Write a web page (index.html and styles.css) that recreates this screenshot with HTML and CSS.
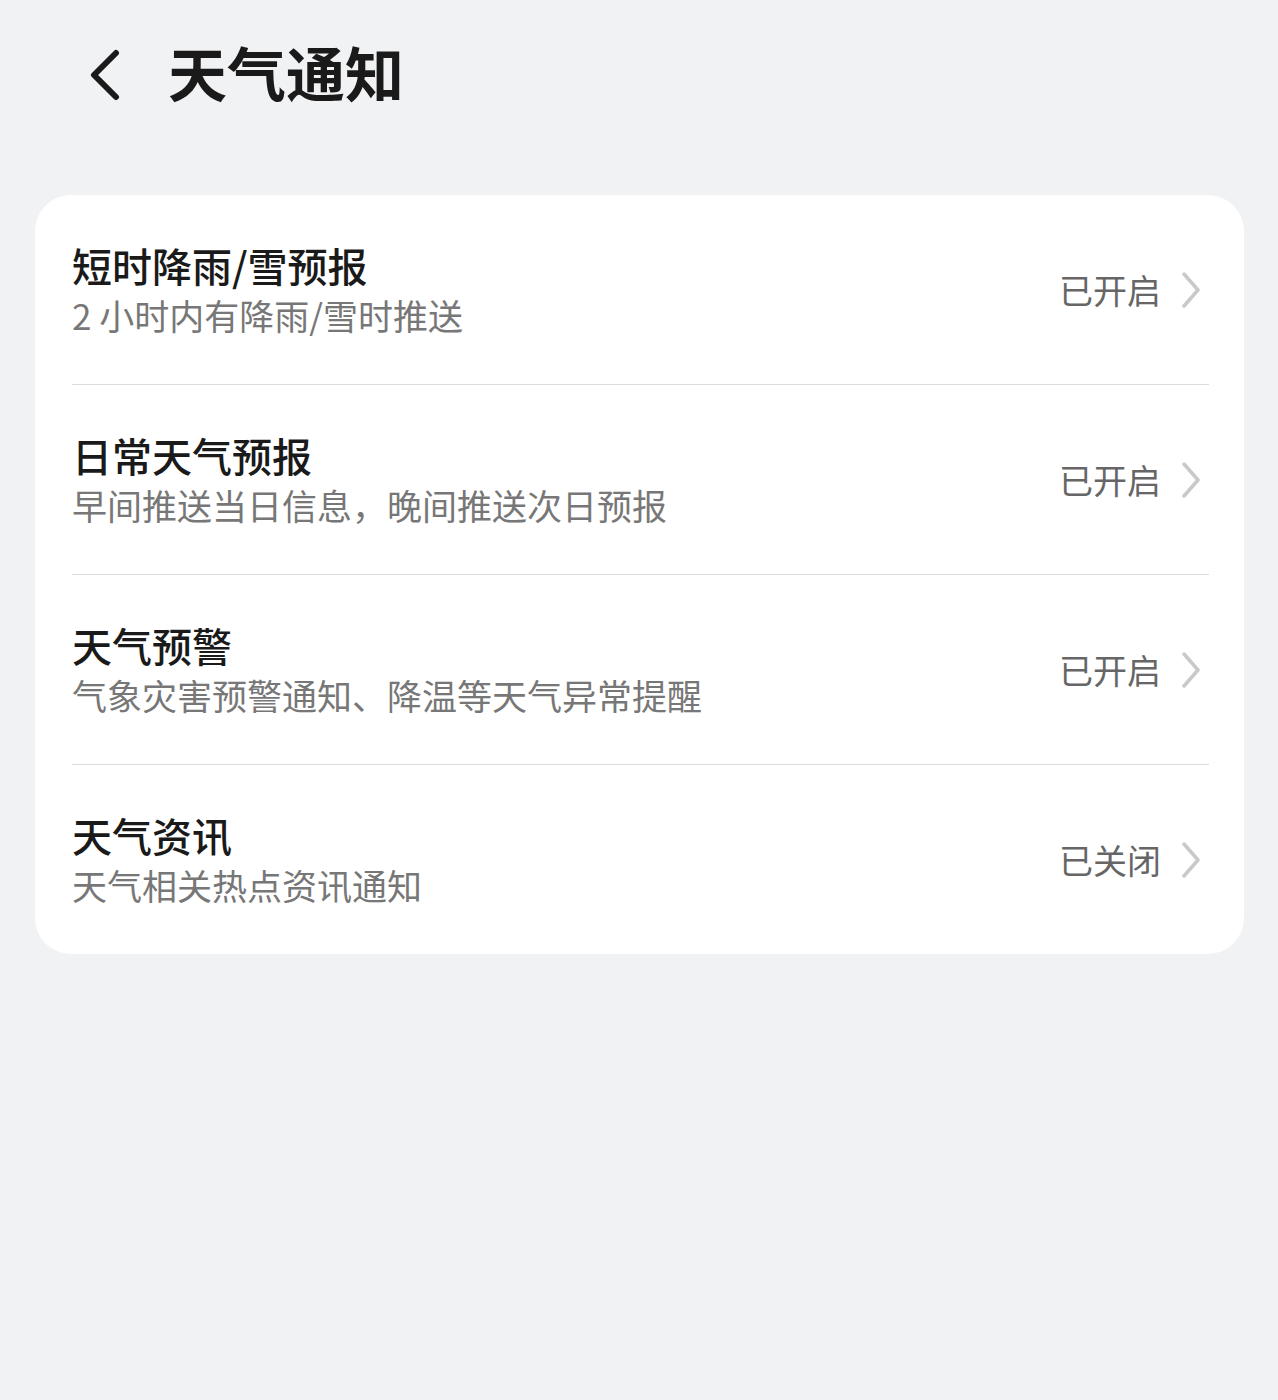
FILE: index.html
```html
<!DOCTYPE html>
<html lang="zh-CN">
<head>
    <meta charset="UTF-8">
    <meta name="viewport" content="width=device-width, initial-scale=1.0">
    <title>天气通知</title>
    <link rel="stylesheet" href="styles.css">
</head>
<body>

    <!-- Header -->
    <div class="header">
        <svg class="back" width="36" height="52" viewBox="0 0 36 52">
            <path d="M30 4 L8 26 L30 48" fill="none" stroke="#1a1a1a" stroke-width="6" stroke-linecap="round" stroke-linejoin="round"/>
        </svg>
        <h1>天气通知</h1>
    </div>

    <!-- Settings list -->
    <div class="card">
        <div class="row">
            <div class="texts">
                <div class="title">短时降雨/雪预报</div>
                <div class="sub">2 小时内有降雨/雪时推送</div>
            </div>
            <div class="status">已开启</div>
            <svg class="arrow" width="20" height="36" viewBox="0 0 20 36"><path d="M3 2 L17 18 L3 34" fill="none" stroke="#c9c9c9" stroke-width="3.5" stroke-linecap="round" stroke-linejoin="round"/></svg>
        </div>
        <div class="row">
            <div class="texts">
                <div class="title">日常天气预报</div>
                <div class="sub">早间推送当日信息，晚间推送次日预报</div>
            </div>
            <div class="status">已开启</div>
            <svg class="arrow" width="20" height="36" viewBox="0 0 20 36"><path d="M3 2 L17 18 L3 34" fill="none" stroke="#c9c9c9" stroke-width="3.5" stroke-linecap="round" stroke-linejoin="round"/></svg>
        </div>
        <div class="row">
            <div class="texts">
                <div class="title">天气预警</div>
                <div class="sub">气象灾害预警通知、降温等天气异常提醒</div>
            </div>
            <div class="status">已开启</div>
            <svg class="arrow" width="20" height="36" viewBox="0 0 20 36"><path d="M3 2 L17 18 L3 34" fill="none" stroke="#c9c9c9" stroke-width="3.5" stroke-linecap="round" stroke-linejoin="round"/></svg>
        </div>
        <div class="row">
            <div class="texts">
                <div class="title">天气资讯</div>
                <div class="sub">天气相关热点资讯通知</div>
            </div>
            <div class="status">已关闭</div>
            <svg class="arrow" width="20" height="36" viewBox="0 0 20 36"><path d="M3 2 L17 18 L3 34" fill="none" stroke="#c9c9c9" stroke-width="3.5" stroke-linecap="round" stroke-linejoin="round"/></svg>
        </div>
    </div>

</body>
</html>
```

FILE: styles.css
```css
body {
    margin: 0;
    background-color: #f1f2f4;
    font-family: "Noto Sans CJK SC", "Noto Sans", sans-serif;
    color: #1a1a1a;
}
.header {
    display: flex;
    align-items: center;
    height: 143px;
    padding-left: 86px;
    box-sizing: border-box;
    padding-bottom: 0;
}
.back {
    display: block;
    margin-top: 6px;
}
h1 {
    margin: 0 0 0 46px;
    font-size: 59px;
    font-weight: 700;
    line-height: 1;
    color: #1a1a1a;
}
.card {
    background-color: #fff;
    border-radius: 36px;
    margin: 52px 34px 0 35px;
    padding: 0 35px 0 37px;
}
.row {
    display: flex;
    align-items: center;
    height: 189px;
    border-bottom: 1px solid #dcdcdc;
}
.row:last-child {
    border-bottom: none;
}
.texts {
    flex: 1;
}
.title {
    font-size: 40px;
    font-weight: 500;
    line-height: 49px;
    color: #1a1a1a;
}
.sub {
    font-size: 35px;
    line-height: 49px;
    color: #777;
}
.status {
    font-size: 34px;
    color: #666;
    margin-right: 20px;
}
.arrow {
    display: block;
    margin-right: 8px;
}
```
